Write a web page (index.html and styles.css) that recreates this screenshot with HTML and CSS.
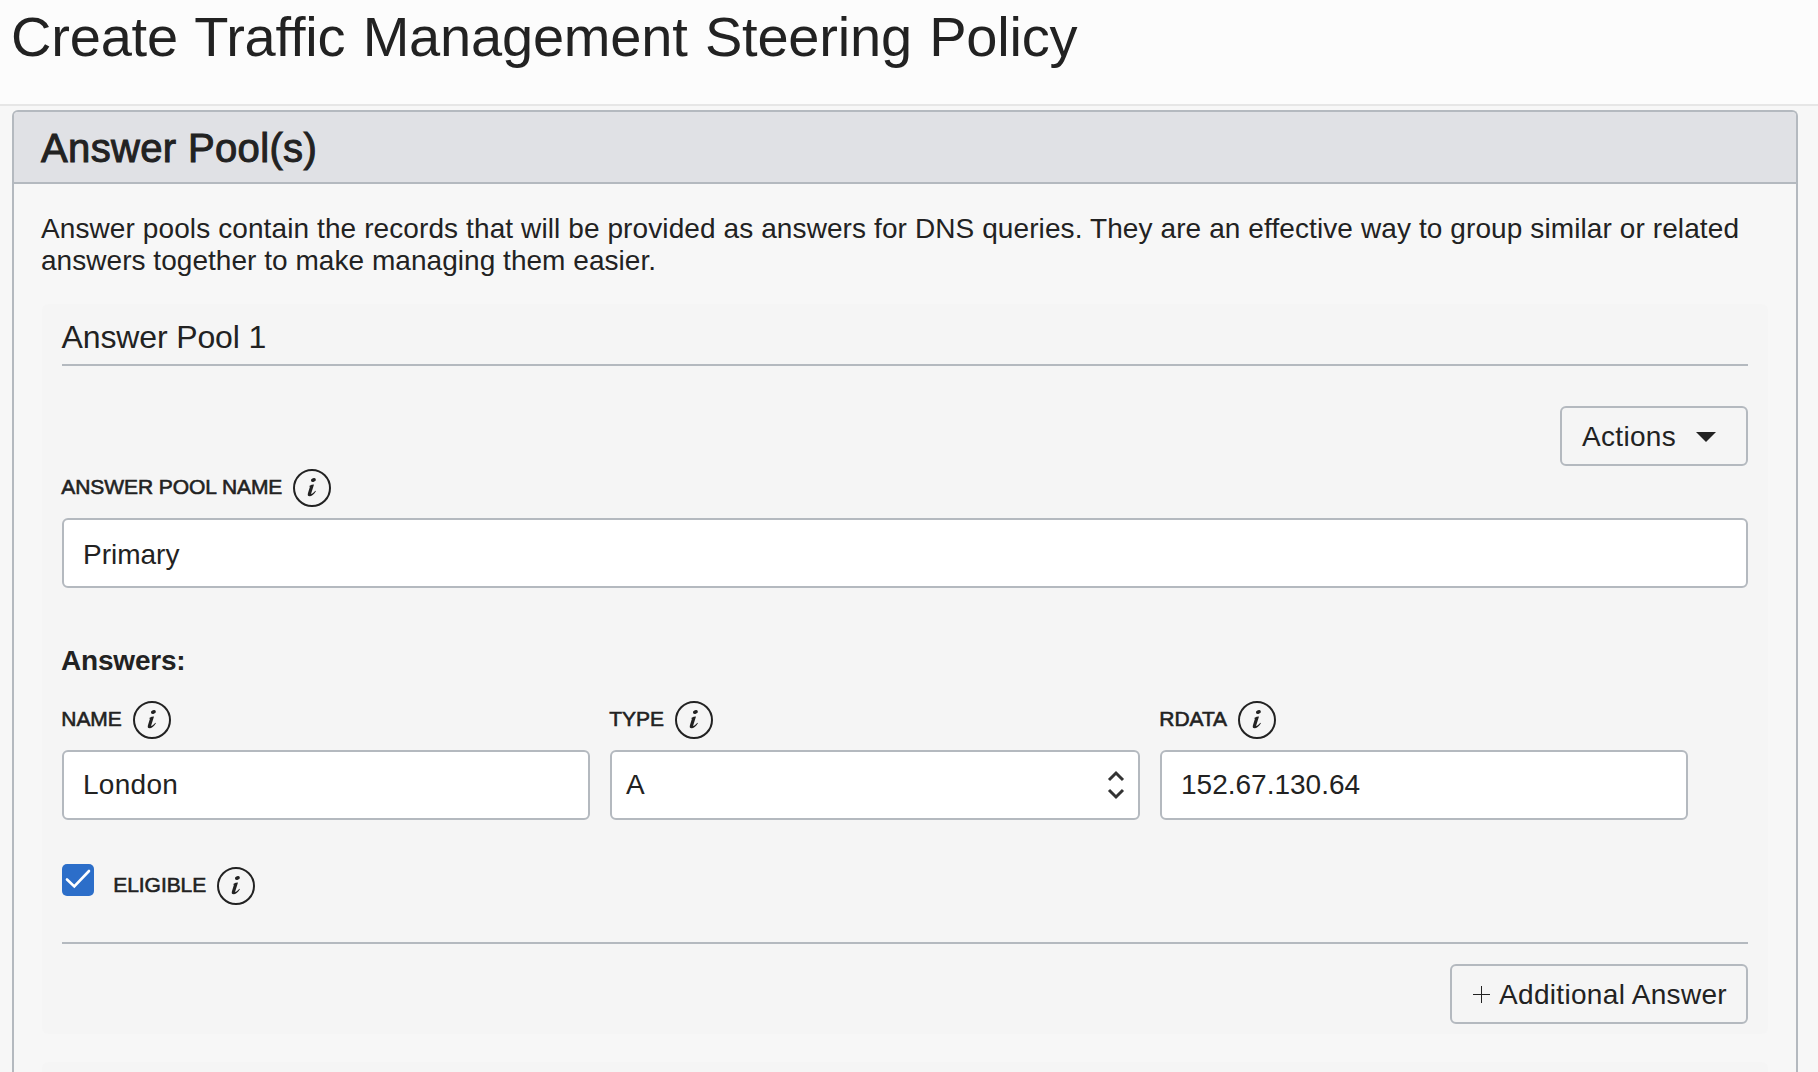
FILE: index.html
```html
<!DOCTYPE html>
<html lang="en">
<head>
<meta charset="utf-8">
<title>Create Traffic Management Steering Policy</title>
<link rel="stylesheet" href="styles.css">
</head>
<body>
<svg class="defs" aria-hidden="true">
  <symbol id="info" viewBox="0 0 38 38">
    <circle cx="19" cy="19" r="18" fill="none" stroke="currentColor" stroke-width="2"/>
    <ellipse cx="20.4" cy="11" rx="2.5" ry="1.9" fill="currentColor" transform="rotate(-15 20.4 11)"/>
    <path d="M15.8 17.2 L18.6 15.8 L21 15.4 L18.2 24.6 C18 25.6 19.2 25.2 22.4 21.8 L22.9 22.2 C20.8 25.6 18.6 27.3 16.6 27.3 C14.8 27.3 14.4 26 15 24 L17 17.6 Z" fill="currentColor"/>
  </symbol>
</svg>
<header class="page-header">
  <h1 class="page-title">Create Traffic Management Steering Policy</h1>
</header>
<main class="panel">
  <h2 class="panel-title">Answer Pool(s)</h2>
  <div class="panel-body">
    <p class="intro"><span class="intro-lead">Answer pools contain the records that will be provided as answers for DNS queries. They are an effective way to group similar or related</span><br>answers together to make managing them easier.</p>
    <section class="pool">
      <h3 class="pool-title">Answer Pool 1</h3>
      <div class="toolbar">
        <button class="button actions" type="button"><span>Actions</span><svg class="caret" viewBox="0 0 20 10"><path d="M0 0H20L10 10Z"/></svg></button>
      </div>
      <div class="field">
        <label class="label"><span>ANSWER POOL NAME</span><svg class="info"><use href="#info"/></svg></label>
        <div class="input pool-name">Primary</div>
      </div>
      <h4 class="answers-title">Answers:</h4>
      <div class="answer-row">
        <div class="field">
          <label class="label"><span>NAME</span><svg class="info"><use href="#info"/></svg></label>
          <div class="input answer-name">London</div>
        </div>
        <div class="field">
          <label class="label"><span>TYPE</span><svg class="info"><use href="#info"/></svg></label>
          <div class="input select"><span>A</span><svg class="arrows" viewBox="0 0 18 30"><path d="M2 10 L9 3 L16 10 M2 20 L9 27 L16 20"/></svg></div>
        </div>
        <div class="field">
          <label class="label"><span>RDATA</span><svg class="info"><use href="#info"/></svg></label>
          <div class="input">152.67.130.64</div>
        </div>
      </div>
      <div class="eligible">
        <svg class="checkbox" viewBox="0 0 32 32"><rect width="32" height="32" rx="5"/><path d="M5 15.5 L12.3 22.5 L27 7"/></svg>
        <label class="label"><span>ELIGIBLE</span><svg class="info"><use href="#info"/></svg></label>
      </div>
      <div class="pool-footer">
        <button class="button add" type="button"><svg class="plus" viewBox="0 0 17 17"><path d="M0 8.5H17M8.5 0V17"/></svg><span>Additional Answer</span></button>
      </div>
    </section>
    <section class="pool pool-next"></section>
  </div>
</main>
</body>
</html>
```
FILE: styles.css
```css
* { box-sizing: border-box; }

body {
  margin: 0;
  height: 1072px;
  overflow: hidden;
  background: #f7f7f7;
  color: #222;
  font-family: "Liberation Sans", Arial, sans-serif;
  font-size: 28px;
}

h1, h2, h3, h4, p { margin: 0; font-weight: 400; }
svg { display: block; flex: none; }
.defs { display: none; }

.page-header {
  height: 106px;
  padding: 5px 0 0 11px;
  background: #fcfcfc;
  border-bottom: 2px solid #e6e6e6;
}
.page-title {
  font-size: 56px;
  line-height: 64px;
  letter-spacing: -0.2px;
  word-spacing: 2px;
  white-space: nowrap;
}

.panel {
  margin: 4px 20px 0 12px;
  height: 962px;
  border: 2px solid #b4b9bf;
  border-bottom: 0;
  border-radius: 6px 6px 0 0;
}
.panel-title {
  height: 72px;
  padding: 2px 0 0 27px;
  border-bottom: 2px solid #b4b9bf;
  border-radius: 4px 4px 0 0;
  background: #e0e1e5;
  font-size: 40px;
  line-height: 68px;
  letter-spacing: 0.35px;
  -webkit-text-stroke: 1px #222;
}
.panel-body { padding: 28px 28px 0; }
.intro {
  height: 92px;
  margin-left: -1px;
  padding-top: 1px;
  line-height: 32px;
  letter-spacing: 0.04px;
  white-space: nowrap;
}
.intro-lead { letter-spacing: 0.1px; }

.pool {
  height: 730px;
  margin-bottom: 28px;
  padding: 0 20px;
  border-radius: 6px;
  background: #f5f5f5;
}
.pool-next { height: 10px; margin: 0; border-radius: 6px 6px 0 0; }
.pool-title {
  height: 62px;
  padding-top: 14px;
  border-bottom: 2px solid #b4b9bf;
  font-size: 32px;
  line-height: 38px;
  letter-spacing: -0.13px;
  text-indent: -0.5px;
}
.toolbar { display: flex; justify-content: flex-end; padding-top: 40px; }

.button {
  display: flex;
  align-items: center;
  height: 60px;
  padding: 1px 20px 0;
  border: 2px solid #b4b9bf;
  border-radius: 6px;
  background: transparent;
  color: inherit;
  font: inherit;
  letter-spacing: 0.32px;
  white-space: nowrap;
}
.actions { width: 188px; justify-content: space-between; padding-right: 30px; }
.caret { width: 20px; height: 10px; fill: #222; }

.label {
  display: flex;
  align-items: center;
  gap: 11px;
  height: 38px;
  font-size: 21px;
  letter-spacing: -0.07px;
  -webkit-text-stroke: 0.6px #222;
}
.label span { padding-bottom: 2px; text-indent: -0.7px; }
.info { width: 38px; height: 38px; }

.toolbar + .field { padding-top: 3px; }
.input {
  display: flex;
  align-items: center;
  height: 70px;
  margin-top: 11px;
  padding: 0 19px;
  border: 2px solid #b4b9bf;
  border-radius: 6px;
  background: #fff;
}
.pool-name { padding-top: 3px; }
.answer-name { letter-spacing: 0.3px; }
.answers-title {
  padding-top: 57px;
  font-weight: 700;
  line-height: 32px;
  letter-spacing: -0.2px;
  text-indent: -1px;
}
.answer-row {
  display: grid;
  grid-template-columns: 528px 530px 528px;
  gap: 20px;
  padding-top: 24px;
}
.select { justify-content: space-between; padding: 0 13px 0 14px; }
.arrows { width: 18px; height: 30px; fill: none; stroke: #333; stroke-width: 3; }

.eligible {
  display: flex;
  align-items: flex-start;
  gap: 20px;
  height: 124px;
  padding-top: 44px;
  border-bottom: 2px solid #b4b9bf;
}
.eligible .label { margin-top: 3px; }
.checkbox { width: 32px; height: 32px; fill: #2c6ec9; }
.checkbox path { fill: none; stroke: #fff; stroke-width: 2.6; stroke-linecap: round; }

.pool-footer { display: flex; justify-content: flex-end; padding-top: 20px; }
.add { width: 298px; gap: 9px; padding-left: 21px; padding-right: 0; }
.plus { width: 17px; height: 17px; fill: none; stroke: #222; stroke-width: 1; }
```
